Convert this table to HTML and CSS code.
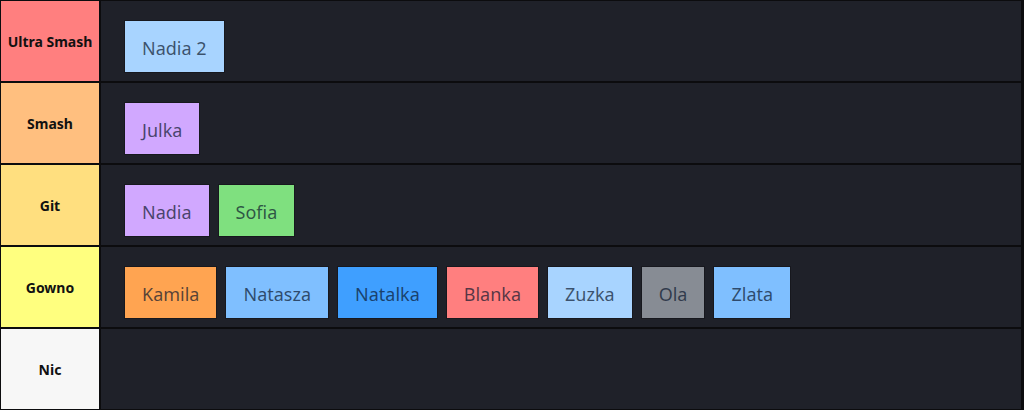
FILE: index.html
```html
<!DOCTYPE html>
<html lang="pl">
<head>
<meta charset="utf-8">
<title>Tier list</title>
<link rel="stylesheet" href="styles.css">
</head>
<body>
<div class="board">
  <div class="tier">
    <div class="label l-ultra">Ultra Smash</div>
    <div class="items">
      <div class="chip c-lightblue">Nadia 2</div>
    </div>
  </div>
  <div class="tier">
    <div class="label l-smash">Smash</div>
    <div class="items">
      <div class="chip c-purple">Julka</div>
    </div>
  </div>
  <div class="tier">
    <div class="label l-git">Git</div>
    <div class="items">
      <div class="chip c-purple">Nadia</div>
      <div class="chip c-green">Sofia</div>
    </div>
  </div>
  <div class="tier">
    <div class="label l-gowno">Gowno</div>
    <div class="items">
      <div class="chip c-orange">Kamila</div>
      <div class="chip c-blue">Natasza</div>
      <div class="chip c-deepblue">Natalka</div>
      <div class="chip c-red">Blanka</div>
      <div class="chip c-lightblue">Zuzka</div>
      <div class="chip c-gray">Ola</div>
      <div class="chip c-blue">Zlata</div>
    </div>
  </div>
  <div class="tier">
    <div class="label l-nic">Nic</div>
    <div class="items"></div>
  </div>
</div>
</body>
</html>
```
FILE: styles.css
```css
* { box-sizing: border-box; }
html, body {
  margin: 0;
  padding: 0;
  background: #0c0c0e;
  height: 410px;
  overflow: hidden;
}
.board {
  display: flex;
  flex-direction: column;
  gap: 2px;
  padding: 1px 3px 1px 1px;
  font-family: "Noto Sans", "Open Sans", sans-serif;
}
.tier {
  display: flex;
  height: 80px;
  gap: 2px;
}
.label {
  width: 98px;
  flex: none;
  display: flex;
  align-items: center;
  justify-content: center;
  font-weight: 700;
  font-size: 14px;
  color: #111;
  text-align: center;
}
.l-ultra { background: #ff7f7f; }
.l-smash { background: #ffbf7f; }
.l-git { background: #ffdf7f; }
.l-gowno { background: #ffff7f; }
.l-nic { background: #f7f7f7; }
.items {
  flex: 1;
  background: #1f2129;
  display: flex;
  align-items: flex-start;
  gap: 10px;
  padding: 20px 24px;
}
.chip {
  height: 51px;
  padding: 3px 17px 0;
  display: flex;
  align-items: center;
  font-size: 18px;
  color: rgba(10, 22, 44, 0.7);
  box-shadow: 0 0 0 1px rgba(0, 0, 0, 0.25);
}
.c-lightblue { background: #a8d4ff; }
.c-purple { background: #d1a8ff; }
.c-green { background: #7fe07f; }
.c-orange { background: #ffa451; }
.c-blue { background: #7fbfff; }
.c-deepblue { background: #3f9fff; }
.c-red { background: #ff7f7f; }
.c-gray { background: #878c94; }
```
